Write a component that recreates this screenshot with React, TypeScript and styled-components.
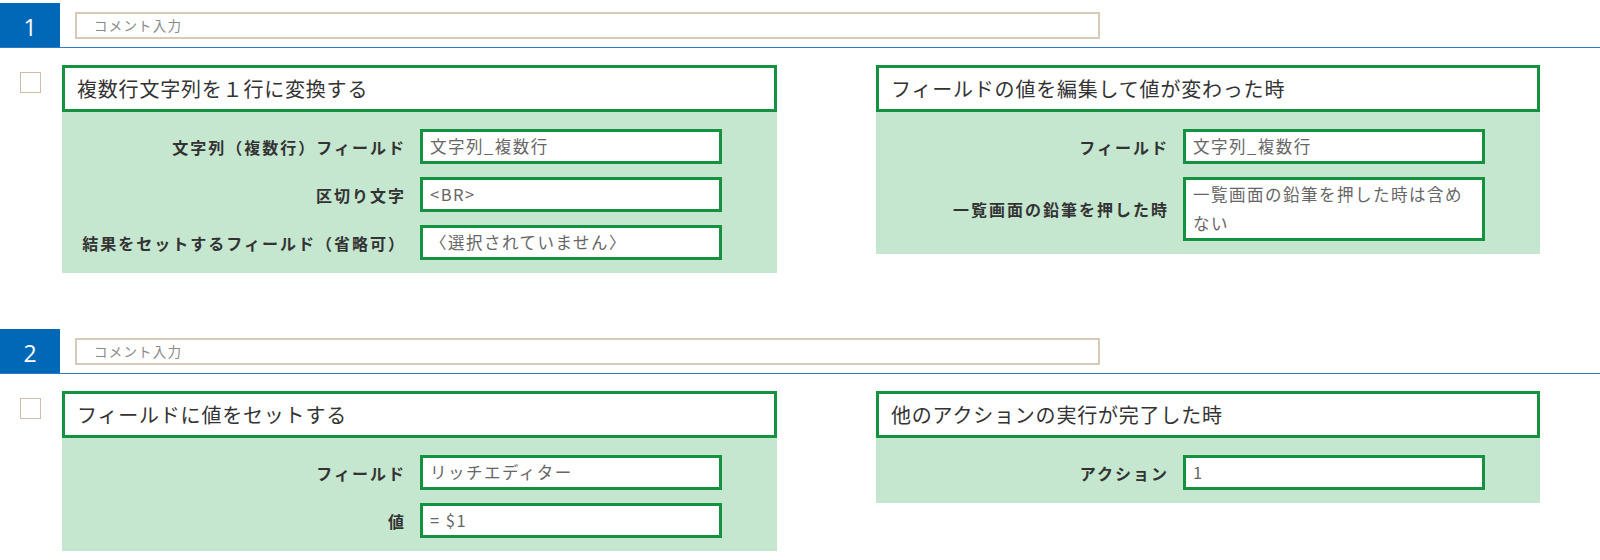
import React from "react";
import styled, { createGlobalStyle } from "styled-components";

const GlobalStyle = createGlobalStyle`
  html, body {
    margin: 0;
    padding: 0;
    background: #ffffff;
  }
  body {
    font-family: "Noto Sans CJK JP", "Noto Sans", sans-serif;
    color: #333333;
  }
`;

const Page = styled.div`
  padding-top: 3px;
  width: 1600px;
  display: flex;
  flex-direction: column;
  gap: 56px;
`;

const Section = styled.section``;

const Header = styled.div`
  display: flex;
  align-items: center;
  height: 44px;
  border-bottom: 1px solid #3079c8;
`;

const StepNumber = styled.div`
  width: 60px;
  height: 44px;
  box-sizing: border-box;
  padding-top: 3px;
  background: #0068b7;
  color: #ffffff;
  font-family: "Open Sans", "Noto Sans", sans-serif;
  font-size: 23px;
  display: flex;
  align-items: center;
  justify-content: center;
`;

const CommentBox = styled.div`
  margin-left: 15px;
  width: 1025px;
  height: 27px;
  box-sizing: border-box;
  border: 2px solid #dac9b7;
  padding-left: 17px;
  font-size: 13.5px;
  letter-spacing: 1.2px;
  color: #8a8a8a;
  display: flex;
  align-items: center;
`;

const Row = styled.div`
  display: flex;
  align-items: flex-start;
  padding-top: 17px;
`;

const Checkbox = styled.div`
  margin-left: 20px;
  margin-top: 7px;
  width: 21px;
  height: 21px;
  box-sizing: border-box;
  border: 1px solid #cfbcaa;
  background: #ffffff;
  flex-shrink: 0;
`;

const Cards = styled.div`
  display: flex;
  align-items: flex-start;
  gap: 99px;
  margin-left: 21px;
`;

const Card = styled.div<{ $w: number }>`
  width: ${(p) => p.$w}px;
`;

const Title = styled.div`
  height: 47px;
  box-sizing: border-box;
  border: 3px solid #14923f;
  background: #ffffff;
  padding-left: 12px;
  font-size: 20px;
  letter-spacing: 0.8px;
  color: #333333;
  display: flex;
  align-items: center;
`;

const Fields = styled.div`
  background: #c5e6cf;
  padding: 17px 55px 13px 0;
  display: grid;
  grid-template-columns: 1fr 302px;
  column-gap: 14px;
  row-gap: 13px;
  align-items: center;
`;

const Label = styled.div`
  text-align: right;
  font-weight: 700;
  font-size: 16px;
  letter-spacing: 2px;
  color: #333333;
  white-space: nowrap;
`;

const Value = styled.div`
  box-sizing: border-box;
  min-height: 35px;
  border: 3px solid #14923f;
  background: #ffffff;
  padding: 0 7px;
  font-size: 16.5px;
  letter-spacing: 1.5px;
  line-height: 29px;
  color: #666666;
  word-break: break-all;
`;

type Field = { label: string; value: string };
type CardData = { title: string; width: number; fields: Field[] };
type StepData = { no: number; cards: CardData[] };

const steps: StepData[] = [
  {
    no: 1,
    cards: [
      {
        title: "複数行文字列を１行に変換する",
        width: 715,
        fields: [
          { label: "文字列（複数行）フィールド", value: "文字列_複数行" },
          { label: "区切り文字", value: "<BR>" },
          { label: "結果をセットするフィールド（省略可）", value: "〈選択されていません〉" },
        ],
      },
      {
        title: "フィールドの値を編集して値が変わった時",
        width: 664,
        fields: [
          { label: "フィールド", value: "文字列_複数行" },
          { label: "一覧画面の鉛筆を押した時", value: "一覧画面の鉛筆を押した時は含めない" },
        ],
      },
    ],
  },
  {
    no: 2,
    cards: [
      {
        title: "フィールドに値をセットする",
        width: 715,
        fields: [
          { label: "フィールド", value: "リッチエディター" },
          { label: "値", value: "= $1" },
        ],
      },
      {
        title: "他のアクションの実行が完了した時",
        width: 664,
        fields: [{ label: "アクション", value: "1" }],
      },
    ],
  },
];

export default function App() {
  return (
    <>
      <GlobalStyle />
      <Page>
        {steps.map((s) => (
          <Section key={s.no}>
            <Header>
              <StepNumber>{s.no}</StepNumber>
              <CommentBox>コメント入力</CommentBox>
            </Header>
            <Row>
              <Checkbox />
              <Cards>
                {s.cards.map((c) => (
                  <Card key={c.title} $w={c.width}>
                    <Title>{c.title}</Title>
                    <Fields>
                      {c.fields.map((f) => (
                        <React.Fragment key={f.label}>
                          <Label>{f.label}</Label>
                          <Value>{f.value}</Value>
                        </React.Fragment>
                      ))}
                    </Fields>
                  </Card>
                ))}
              </Cards>
            </Row>
          </Section>
        ))}
      </Page>
    </>
  );
}
